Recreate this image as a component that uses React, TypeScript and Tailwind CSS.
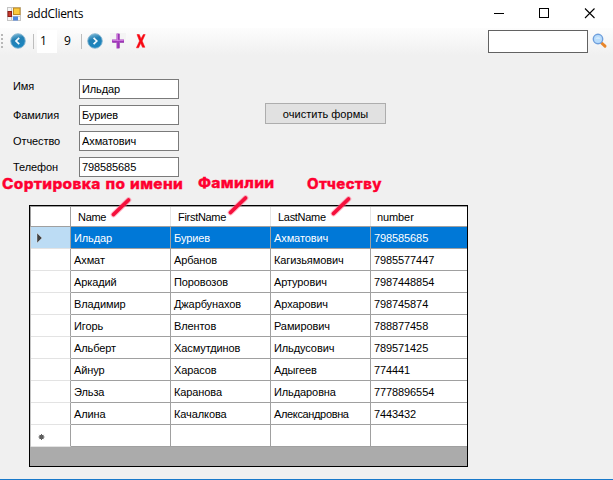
import React from "react";

const rows = [
  ["Ильдар", "Буриев", "Ахматович", "798585685"],
  ["Ахмат", "Арбанов", "Кагизьямович", "7985577447"],
  ["Аркадий", "Поровозов", "Артурович", "7987448854"],
  ["Владимир", "Джарбунахов", "Архарович", "798745874"],
  ["Игорь", "Влентов", "Рамирович", "788877458"],
  ["Альберт", "Хасмутдинов", "Ильдусович", "789571425"],
  ["Айнур", "Харасов", "Адыгеев", "774441"],
  ["Эльза", "Каранова", "Ильдаровна", "7778896554"],
  ["Алина", "Качалкова", "Александровна", "7443432"],
  ["", "", "", ""],
];

const fields = [
  { label: "Имя", value: "Ильдар", pad: "pb-[7px]" },
  { label: "Фамилия", value: "Буриев", pad: "pb-0" },
  { label: "Отчество", value: "Ахматович", pad: "pb-0" },
  { label: "Телефон", value: "798585685", pad: "pb-0" },
];

function RoundArrow({ right = false }: { right?: boolean }) {
  const id = right ? "ballNext" : "ballPrev";
  return (
    <svg width="16" height="16" viewBox="0 0 16 16" className="shrink-0">
      <defs>
        <linearGradient id={id} x1="0" y1="0" x2="0.3" y2="1">
          <stop offset="0" stopColor="#8cc4de" />
          <stop offset="0.45" stopColor="#2380b4" />
          <stop offset="1" stopColor="#1b86c0" />
        </linearGradient>
      </defs>
      <circle cx="8" cy="8" r="7.3" fill={`url(#${id})`} stroke="#8ab8d2" strokeWidth="0.9" />
      <path
        d={right ? "M6.6 4.8L9.800 8l-3.200 3.200" : "M9.200 4.8L6 8l3.200 3.200"}
        fill="none"
        stroke="#f4fbff"
        strokeWidth="1.700"
      />
    </svg>
  );
}

function AppIcon() {
  return (
    <svg width="14" height="14" viewBox="0 0 14 14" className="shrink-0">
      <rect x="0.5" y="0.5" width="13" height="13" fill="#f4f4f4" stroke="#c4c4c4" />
      <path d="M4.5 0v14M0 9.5h14" stroke="#c8c8c8" />
      <rect x="1" y="4.5" width="3.500" height="5" fill="#c83a2c" stroke="#8c1c18" />
      <rect x="6.500" y="1" width="6.500" height="6.500" fill="#fbc93c" stroke="#c08a20" />
      <rect x="6" y="9.500" width="5" height="4" fill="#4d86e0" />
    </svg>
  );
}

function Stroke({ className }: { className: string }) {
  return (
    <svg width="24" height="22" viewBox="0 0 24 22" className={`absolute ${className}`}>
      <path d="M4.500 18.500L19.500 4" stroke="#ff6f90" strokeOpacity="0.5" strokeWidth="5.600" strokeLinecap="round" />
      <path d="M4.500 18.500L19.500 4" stroke="#f5103c" strokeWidth="3.800" strokeLinecap="round" />
    </svg>
  );
}

export default function App() {
  return (
    <div className="relative flex h-[480px] w-[613px] flex-col overflow-hidden border-b border-[#1979ca] bg-[#f0f0f0] font-['Liberation_Sans',Arial,sans-serif] text-[11px] leading-[14px] tracking-[-0.1px] text-black">
      <header className="flex h-[28px] shrink-0 items-center bg-white pl-[7px]">
        <AppIcon />
        <span className="ml-[6px] flex-1 font-['Open_Sans','Noto_Sans',sans-serif] text-[12px] tracking-[-0.3px]">addClients</span>
        <svg width="119" height="12" viewBox="0 0 119 12" fill="none" stroke="#000" shapeRendering="crispEdges">
          <path d="M0 5.5h10M45.500 .5h9v9h-9z" />
          <path d="M91 .5l9.500 9.500M100.500 .5l-9.500 9.500" shapeRendering="auto" strokeWidth="1.1" />
        </svg>
      </header>

      <div className="flex h-[27px] shrink-0 items-center bg-linear-to-b from-[#fdfdfd] to-[#f0f0f0] font-['Open_Sans','Noto_Sans',sans-serif] text-[12px]">
        <div className="ml-[1px] h-[15px] w-[2px] bg-[repeating-linear-gradient(to_bottom,#b8b8b8_0_2px,transparent_2px_4px)]" />
        <div className="-mt-px ml-[7px] flex"><RoundArrow /></div>
        <div className="ml-[7px] h-[15px] w-px bg-[#bdbdbd]" />
        <div className="ml-[3px] flex h-[23px] w-[20px] items-center bg-white pb-px pl-[3px]">1</div>
        <span className="ml-[7px] w-[9px] pb-px">9</span>
        <div className="ml-[8px] h-[15px] w-px bg-[#bdbdbd]" />
        <div className="-mt-px ml-[5px] flex"><RoundArrow right /></div>
        <svg width="16" height="16" viewBox="0 0 16 16" className="-mt-px ml-[7px]">
          <rect width="16" height="16" fill="#f4f4f4" />
          <path d="M6.500 .5h3v6h4.500v3H9.500v6h-3v-6H2v-3h4.500z" fill="#a83cc0" />
          <path d="M7.300 1V8M2.500 7.300h11" stroke="#d88ae4" strokeWidth=".9" />
          <path d="M9.100 1v5.700M9.100 9.500v5.500M2.500 9.200h4M10 9.200h4" stroke="#7c2498" strokeWidth=".7" />
        </svg>
        <svg width="16" height="16" viewBox="0 0 16 16" className="-mt-px ml-[7px]">
          <path d="M4 1.500h2.300L8 5.700 10.300 1.500h1.900L9.200 8l2.700 6.300H9.500L7.700 10.300 5.600 14.800H3.400L6.500 8z" fill="#f80812" stroke="#f80812" strokeWidth=".5" />
        </svg>
        <div className="ml-auto h-[23px] w-[100px] border border-[#626262] bg-white" />
        <svg width="16" height="16" viewBox="0 0 16 16" className="-mt-px mr-[5px] ml-[4px] shrink-0">
          <path d="M9.600 10L13 13.200" stroke="#e8862a" strokeWidth="3" strokeLinecap="round" />
          <circle cx="6" cy="6" r="4.700" fill="#b9dcfb" stroke="#6f9fdc" strokeWidth="1.400" />
          <path d="M3.500 5.500a3 2.500 0 0 1 5 0z" fill="#e9f5ff" />
        </svg>
      </div>

      <main className="flex flex-col">
        <section className="flex pt-[24px] pl-[13px]">
          <div className="flex flex-col gap-[6px]">
            {fields.map((f) => (
              <label key={f.label} className="flex h-[20px] items-center">
                <span className={`w-[66px] ${f.pad}`}>{f.label}</span>
                <input
                  defaultValue={f.value}
                  className="h-[20px] w-[100px] border border-[#7a7a7a] bg-white pl-[2px] outline-none"
                />
              </label>
            ))}
          </div>
          <button className="mt-[24px] ml-[86px] h-[21px] w-[121px] border border-[#adadad] bg-[#e1e1e1] tracking-[0.02px]">
            очистить формы
          </button>
        </section>

        <section className="mt-[28px] ml-[29px] flex h-[262px] w-[439px] flex-col border border-black bg-[#ababab]">
          <div className="flex h-[21px] overflow-hidden border-t border-b border-l border-[#a0a0a0] bg-white tracking-[-0.3px]">
            <div className="w-[40px] shrink-0 border-r border-[#a0a0a0]" />
            {["Name", "FirstName", "LastName", "number"].map((h, i) => (
              <div
                key={h}
                className={`pt-[3px] ${i < 3 ? "w-[100px] shrink-0 border-r border-[#e5e5e5] pl-[7px]" : "w-[96px] pl-[6px] tracking-[-0.1px]"}`}
              >
                {h}
              </div>
            ))}
          </div>
          {rows.map((row, i) => (
            <div key={i} className={`flex h-[22px] border-l border-[#c4c4c4] ${i === 0 ? "text-white" : ""}`}>
              <div
                className={`flex w-[40px] shrink-0 items-center border-r border-b border-r-[#a0a0a0] border-b-[#e3e3e3] pl-[5px] ${i === 0 ? "bg-[#bcdcf4]" : "bg-white"}`}
              >
                {i === 0 && (
                  <svg width="8" height="12" viewBox="0 0 8 12">
                    <path d="M1 1L6 6 1 11z" fill="#404040" stroke="#eee" strokeWidth=".4" />
                  </svg>
                )}
                {i === 9 && (
                  <svg width="10" height="10" viewBox="0 0 10 10" className="mt-[3px]">
                    <circle cx="5.500" cy="5" r="2.200" fill="#505050" />
                    <path d="M5.500 2v6M2.500 5h6M3.400 2.900l4.200 4.200M7.600 2.900L3.400 7.100" stroke="#606060" strokeWidth="1" />
                  </svg>
                )}
              </div>
              {row.map((cell, j) => (
                <div
                  key={j}
                  className={`flex items-center border-b border-[#a0a0a0] pl-[3px] ${j < 3 ? "w-[100px] shrink-0 border-r" : "w-[96px]"} ${i === 0 ? "bg-[#0078d7]" : "bg-white"} ${cell.length > 12 ? "tracking-[-0.35px]" : ""}`}
                >
                  {cell}
                </div>
              ))}
            </div>
          ))}
        </section>
      </main>

      <div className="pointer-events-none absolute inset-0 font-['Inter','Liberation_Sans',sans-serif] text-[14px] leading-[18px] font-extrabold tracking-[0.3px] whitespace-nowrap text-[#ff0030] [-webkit-text-stroke:0.3px_#ff0030]">
        <span className="absolute top-[175px] left-[2px] origin-left scale-x-[1.1] [word-spacing:1px]">Сортировка по имени</span>
        <span className="absolute top-[174px] left-[198px] origin-left scale-x-[1.11]">Фамилии</span>
        <span className="absolute top-[175px] left-[307px] origin-left scale-x-[1.07]">Отчеству</span>
        <Stroke className="top-[196px] left-[109px]" />
        <Stroke className="top-[194px] left-[226px]" />
        <Stroke className="top-[195px] left-[329px]" />
      </div>
    </div>
  );
}
